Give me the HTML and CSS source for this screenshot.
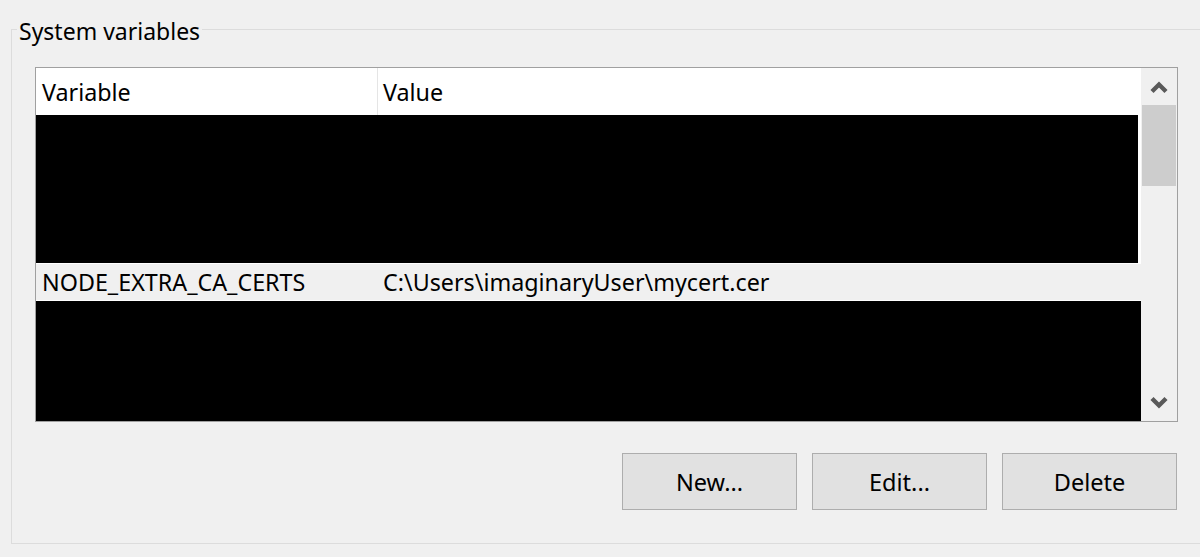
FILE: index.html
```html
<!DOCTYPE html>
<html>
<head>
<meta charset="utf-8">
<link rel="stylesheet" href="styles.css">
</head>
<body>
<fieldset class="group">
  <legend class="group-title">System variables</legend>
  <div class="inner">
    <div class="listbox">
      <div class="list">
        <div class="header">
          <div class="col col-var">Variable</div>
          <div class="col col-val">Value</div>
        </div>
        <div class="redact redact-top"></div>
        <div class="row selected">
          <div class="col col-var">NODE_EXTRA_CA_CERTS</div>
          <div class="col col-val">C:\Users\imaginaryUser\mycert.cer</div>
        </div>
        <div class="redact redact-bottom"></div>
      </div>
      <div class="scrollbar">
        <div class="sb-btn">
          <svg class="chev" width="18" height="14" viewBox="0 0 18 14"><polyline points="2,11.5 9,4.5 16,11.5" fill="none" stroke="#5a5a5a" stroke-width="4.4"/></svg>
        </div>
        <div class="sb-thumb"></div>
        <div class="sb-track"></div>
        <div class="sb-btn">
          <svg class="chev" width="18" height="14" viewBox="0 0 18 14"><polyline points="2,2.5 9,9.5 16,2.5" fill="none" stroke="#5a5a5a" stroke-width="4.4"/></svg>
        </div>
      </div>
    </div>
    <div class="buttons">
      <button class="btn">New...</button>
      <button class="btn">Edit...</button>
      <button class="btn">Delete</button>
    </div>
  </div>
</fieldset>
</body>
</html>
```

FILE: styles.css
```css
html, body {
  margin: 0;
  padding: 0;
  background: #f0f0f0;
  overflow: hidden;
}
body {
  font-family: "Noto Sans", "Open Sans", sans-serif;
  font-size: 23.3px;
  color: #000;
  width: 1200px;
  height: 557px;
}
.group {
  margin: 15px 0 0 11px;
  padding: 0 0 33px 0;
  border: 1px solid #dcdcdc;
  width: 1240px;
  box-sizing: border-box;
}
.group-title {
  margin-left: 5px;
  padding: 4px 2px 0 2px;
  line-height: 24px;
  height: 28px;
  box-sizing: border-box;
  font-size: 23px;
}
.inner {
  width: 1166px;
  padding-left: 23px;
  padding-top: 24px;
  box-sizing: border-box;
}
.listbox {
  display: flex;
  border: 1px solid #a0a0a0;
  background: #fff;
  height: 355px;
  box-sizing: border-box;
}
.list {
  width: 1105px;
  display: flex;
  flex-direction: column;
}
.header {
  display: flex;
  height: 47px;
  align-items: center;
  background: #fff;
}
.col {
  box-sizing: border-box;
  white-space: nowrap;
}
.col-var {
  width: 342px;
  padding-left: 6px;
}
.col-val {
  padding-left: 5px;
}
.header .col-var {
  border-right: 1px solid #e5e5e5;
  height: 100%;
  display: flex;
  align-items: center;
}
.redact {
  background: #000;
}
.redact-top {
  height: 148px;
  width: 1102px;
}
.row {
  display: flex;
  align-items: center;
  height: 38px;
  box-sizing: border-box;
}
.row.selected {
  background: #f0f0f0;
  border-top: 1px solid #fff;
  border-bottom: 1px solid #fff;
}
.redact-bottom {
  flex: 1;
  width: 1107px;
}
.scrollbar {
  width: 36px;
  background: #f0f0f0;
  display: flex;
  flex-direction: column;
}
.sb-btn {
  height: 37px;
  display: flex;
  align-items: center;
  justify-content: center;
}
.chev {
  display: block;
}
.sb-thumb {
  height: 81px;
  background: #cdcdcd;
  margin: 0 1px;
}
.sb-track {
  flex: 1;
}
.buttons {
  display: flex;
  justify-content: flex-end;
  gap: 15px;
  margin-top: 31px;
  padding-right: 1px;
}
.btn {
  width: 175px;
  height: 57px;
  background: #e1e1e1;
  border: 1px solid #adadad;
  font-family: "Noto Sans", "Open Sans", sans-serif;
  font-size: 23.5px;
  color: #000;
  padding: 0;
}
```
